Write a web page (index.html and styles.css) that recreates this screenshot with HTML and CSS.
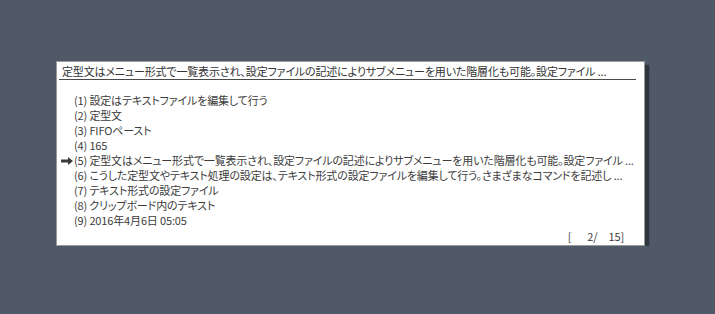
FILE: index.html
```html
<!DOCTYPE html>
<html lang="ja">
<head>
    <meta charset="UTF-8">
    <meta name="viewport" content="width=device-width, initial-scale=1.0">
    <title>定型文メニュー</title>
    <link rel="stylesheet" href="styles.css">
</head>
<body>
    <div class="popup">
        <div class="popup-title">定型文はメニュー形式で一覧表示され、設定ファイルの記述によりサブメニューを用いた階層化も可能。設定ファイル ...</div>

        <ul class="item-list">
            <li class="item">(1) 設定はテキストファイルを編集して行う</li>
            <li class="item">(2) 定型文</li>
            <li class="item">(3) FIFOペースト</li>
            <li class="item">(4) 165</li>
            <li class="item current">
                <svg class="cursor" width="12" height="8" viewBox="0 0 12 8">
                    <path d="M0 2.6h7V0l5 4-5 4V5.4H0z" fill="#3a3a3a"/>
                </svg>(5) 定型文はメニュー形式で一覧表示され、設定ファイルの記述によりサブメニューを用いた階層化も可能。設定ファイル ...</li>
            <li class="item">(6) こうした定型文やテキスト処理の設定は、テキスト形式の設定ファイルを編集して行う。さまざまなコマンドを記述し ...</li>
            <li class="item">(7) テキスト形式の設定ファイル</li>
            <li class="item">(8) クリップボード内のテキスト</li>
            <li class="item">(9) 2016年4月6日 05:05</li>
        </ul>

        <div class="page-count">[<span class="num">2</span>/<span class="num">15</span>]</div>
    </div>
</body>
</html>
```

FILE: styles.css
```css
* {
    margin: 0;
    padding: 0;
    box-sizing: border-box;
}

body {
    background-color: #4f5967;
    font-family: "Noto Sans CJK JP", "Noto Sans", sans-serif;
    font-size: 11px;
    font-feature-settings: "palt";
    letter-spacing: -0.15px;
    color: #3c3c3c;
}

.popup {
    margin: 61px 0 0 56px;
    width: 589px;
    height: 185px;
    background: #fff;
    border: 1px solid #9a9a9a;
    box-shadow: 4px 4px 1px rgba(20, 24, 30, 0.55);
    display: flex;
    flex-direction: column;
    overflow: hidden;
}

.popup-title {
    margin: 2px 8px 0 2px;
    padding-left: 3px;
    line-height: 15px;
    border-bottom: 1px solid #4a4a4a;
    color: #333;
    white-space: nowrap;
    overflow: hidden;
}

.item-list {
    list-style: none;
    margin-top: 13px;
}

.item {
    line-height: 15px;
    padding-left: 17px;
    white-space: nowrap;
    position: relative;
}

.cursor {
    position: absolute;
    left: 4px;
    top: 4px;
}

.page-count {
    margin: 1px 20px 0 0;
    text-align: right;
    line-height: 15px;
    white-space: pre;
}

.page-count .num {
    display: inline-block;
    width: 22px;
    text-align: right;
}

.page-count .num + .num {
    width: 23px;
}
```
